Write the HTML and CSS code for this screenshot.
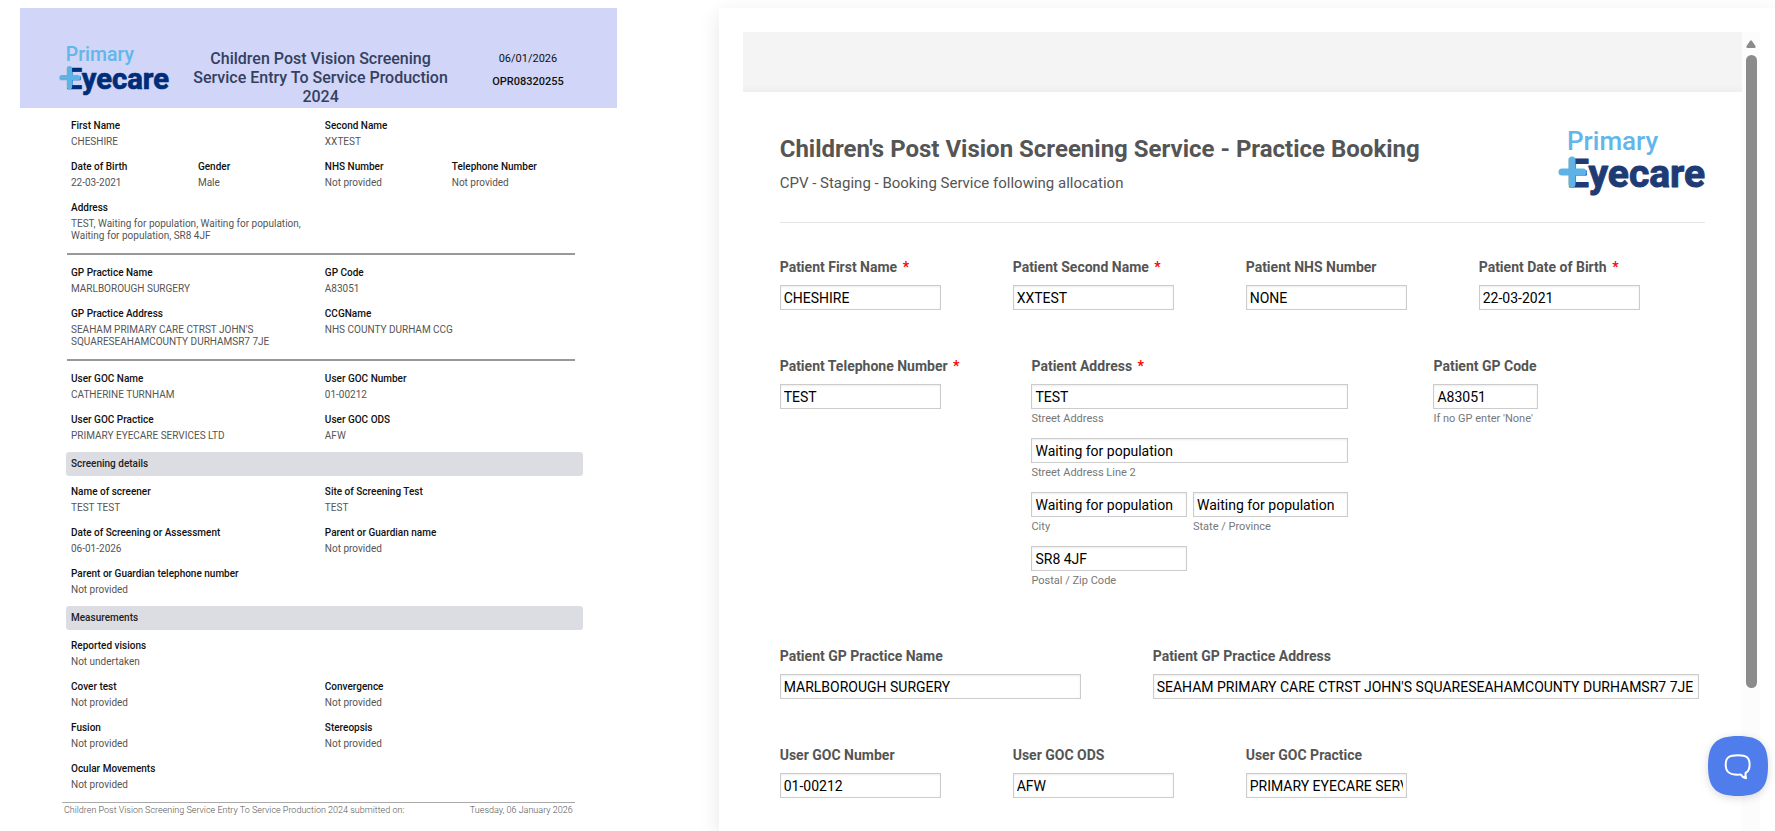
FILE: index.html
```html
<!DOCTYPE html>
<html lang="en">
<head>
  <meta charset="UTF-8">
  <meta name="viewport" content="width=device-width, initial-scale=1.0">
  <title>Children's Post Vision Screening Service - Practice Booking</title>
  <link rel="stylesheet" href="styles.css">
</head>
<body>

  <div class="page">

    <!-- Report -->
    <article class="report">
      <header class="report-header">
        <svg class="logo logo-small" viewBox="0 0 147 65" role="img" aria-label="Primary Eyecare">
          <text class="logo-top" x="9" y="19">Primary</text>
          <text class="logo-bottom" x="9" y="56">Eyecare</text>
          <path class="logo-plus" d="M14 29V53M4 41H25"/>
        </svg>
        <h2>Children Post Vision Screening Service Entry To Service Production 2024</h2>
        <div class="report-ref">
          <span>06/01/2026</span>
          <strong>OPR08320255</strong>
        </div>
      </header>

      <div class="report-body">
        <dl class="details">
          <div class="half"><dt>First Name</dt><dd>CHESHIRE</dd></div>
          <div class="half"><dt>Second Name</dt><dd>XXTEST</dd></div>
          <div><dt>Date of Birth</dt><dd>22-03-2021</dd></div>
          <div><dt>Gender</dt><dd>Male</dd></div>
          <div><dt>NHS Number</dt><dd>Not provided</dd></div>
          <div><dt>Telephone Number</dt><dd>Not provided</dd></div>
          <div class="half"><dt>Address</dt><dd>TEST, Waiting for population, Waiting for population, Waiting for population, SR8 4JF</dd></div>
        </dl>
        <hr>
        <dl class="details">
          <div class="half"><dt>GP Practice Name</dt><dd>MARLBOROUGH SURGERY</dd></div>
          <div class="half"><dt>GP Code</dt><dd>A83051</dd></div>
          <div class="half"><dt>GP Practice Address</dt><dd>SEAHAM PRIMARY CARE CTRST JOHN'S SQUARESEAHAMCOUNTY DURHAMSR7 7JE</dd></div>
          <div class="half"><dt>CCGName</dt><dd>NHS COUNTY DURHAM CCG</dd></div>
        </dl>
        <hr>
        <dl class="details">
          <div class="half"><dt>User GOC Name</dt><dd>CATHERINE TURNHAM</dd></div>
          <div class="half"><dt>User GOC Number</dt><dd>01-00212</dd></div>
          <div class="half"><dt>User GOC Practice</dt><dd>PRIMARY EYECARE SERVICES LTD</dd></div>
          <div class="half"><dt>User GOC ODS</dt><dd>AFW</dd></div>
        </dl>
        <h3>Screening details</h3>
        <dl class="details">
          <div class="half"><dt>Name of screener</dt><dd>TEST TEST</dd></div>
          <div class="half"><dt>Site of Screening Test</dt><dd>TEST</dd></div>
          <div class="half"><dt>Date of Screening or Assessment</dt><dd>06-01-2026</dd></div>
          <div class="half"><dt>Parent or Guardian name</dt><dd>Not provided</dd></div>
          <div class="half"><dt>Parent or Guardian telephone number</dt><dd>Not provided</dd></div>
        </dl>
        <h3>Measurements</h3>
        <dl class="details">
          <div class="full"><dt>Reported visions</dt><dd>Not undertaken</dd></div>
          <div class="half"><dt>Cover test</dt><dd>Not provided</dd></div>
          <div class="half"><dt>Convergence</dt><dd>Not provided</dd></div>
          <div class="half"><dt>Fusion</dt><dd>Not provided</dd></div>
          <div class="half"><dt>Stereopsis</dt><dd>Not provided</dd></div>
          <div class="half"><dt>Ocular Movements</dt><dd>Not provided</dd></div>
        </dl>
      </div>

      <footer class="report-footer">
        <span>Children Post Vision Screening Service Entry To Service Production 2024 submitted on:</span>
        <span>Tuesday, 06 January 2026</span>
      </footer>
    </article>

    <!-- Booking form -->
    <main class="panel">
      <form class="booking">
        <div class="banner"></div>
        <div class="booking-body">
          <header class="booking-header">
            <div>
              <h1>Children's Post Vision Screening Service - Practice Booking</h1>
              <p>CPV - Staging - Booking Service following allocation</p>
            </div>
            <svg class="logo" viewBox="0 0 147 65" role="img" aria-label="Primary Eyecare">
              <text class="logo-top" x="9" y="19">Primary</text>
              <text class="logo-bottom" x="9" y="56">Eyecare</text>
              <path class="logo-plus" d="M14 29V53M4 41H25"/>
            </svg>
          </header>

          <div class="row">
            <div class="field">
              <label for="firstName">Patient First Name <span class="required">*</span></label>
              <input type="text" id="firstName" value="CHESHIRE">
            </div>
            <div class="field">
              <label for="secondName">Patient Second Name <span class="required">*</span></label>
              <input type="text" id="secondName" value="XXTEST">
            </div>
            <div class="field">
              <label for="nhsNumber">Patient NHS Number</label>
              <input type="text" id="nhsNumber" value="NONE">
            </div>
            <div class="field">
              <label for="dob">Patient Date of Birth <span class="required">*</span></label>
              <input type="text" id="dob" value="22-03-2021">
            </div>
          </div>

          <div class="row row-address">
            <div class="field">
              <label for="telephone">Patient Telephone Number <span class="required">*</span></label>
              <input type="text" id="telephone" value="TEST">
            </div>
            <div class="field field-address">
              <label for="street">Patient Address <span class="required">*</span></label>
              <div class="address">
                <div class="line">
                  <input type="text" id="street" value="TEST">
                  <label class="hint" for="street">Street Address</label>
                </div>
                <div class="line">
                  <input type="text" id="street2" value="Waiting for population">
                  <label class="hint" for="street2">Street Address Line 2</label>
                </div>
                <div>
                  <input type="text" id="city" value="Waiting for population">
                  <label class="hint" for="city">City</label>
                </div>
                <div>
                  <input type="text" id="state" value="Waiting for population">
                  <label class="hint" for="state">State / Province</label>
                </div>
                <div>
                  <input type="text" id="postcode" value="SR8 4JF">
                  <label class="hint" for="postcode">Postal / Zip Code</label>
                </div>
              </div>
            </div>
            <div class="field field-short">
              <label for="gpCode">Patient GP Code</label>
              <input type="text" id="gpCode" value="A83051">
              <span class="hint">If no GP enter 'None'</span>
            </div>
          </div>

          <div class="row">
            <div class="field field-medium">
              <label for="gpName">Patient GP Practice Name</label>
              <input type="text" id="gpName" value="MARLBOROUGH SURGERY">
            </div>
            <div class="field field-long">
              <label for="gpAddress">Patient GP Practice Address</label>
              <input type="text" id="gpAddress" value="SEAHAM PRIMARY CARE CTRST JOHN'S SQUARESEAHAMCOUNTY DURHAMSR7 7JE">
            </div>
          </div>

          <div class="row">
            <div class="field">
              <label for="gocNumber">User GOC Number</label>
              <input type="text" id="gocNumber" value="01-00212">
            </div>
            <div class="field">
              <label for="gocOds">User GOC ODS</label>
              <input type="text" id="gocOds" value="AFW">
            </div>
            <div class="field">
              <label for="gocPractice">User GOC Practice</label>
              <input type="text" id="gocPractice" value="PRIMARY EYECARE SERVICES LTD">
            </div>
          </div>
        </div>
      </form>

      <div class="scrollbar">
        <svg width="10" height="8" viewBox="0 0 10 8"><path d="M4 1Q5 -.5 6 1L9.5 6Q10 8 8.500 8H1.500Q0 8 .5 6Z" fill="#8b8b8b"/></svg>
        <div class="thumb"></div>
      </div>
    </main>
  </div>

  <button class="chat" type="button" aria-label="Open chat">
    <svg width="60" height="60" viewBox="0 0 60 60">
      <path class="chat-shape" d="M30 0C52 0 60 8 60 30S52 60 30 60 0 52 0 30 8 0 30 0Z"/>
      <path class="chat-bubble" d="M30 19.200C38.500 19.200 41.600 21.500 41.600 28.500C41.600 33.500 40.300 35.700 37.600 36.800C37.300 38.500 37.500 40.500 38 42.300C35.500 41.500 33.500 39.900 32.500 38.400C31.500 38.700 30.500 38.700 29.500 38.700C20.800 38.700 17.700 35.500 17.700 28.800C17.700 21.500 21 19.200 30 19.200Z"/>
    </svg>
  </button>

</body>
</html>
```
FILE: styles.css
```css
* {
  box-sizing: border-box;
}

body {
  margin: 0;
  font-family: Roboto, Arial, sans-serif;
  background-color: #fff;
  color: #222;
}

.page {
  display: grid;
  grid-template-columns: 34% 1fr;
  grid-template-rows: minmax(0, 1fr);
  gap: 102px;
  height: 100vh;
  padding: 8px 0 0 20px;
  overflow: hidden;
}

h1, h2, h3, p, dl, dd {
  margin: 0;
}

/* Logo */
.logo {
  width: 147px;
  flex: none;
  overflow: visible;
}

.logo-small {
  width: 110px;
}

.logo-top {
  font-size: 26px;
  font-weight: 500;
  fill: #62b6ea;
}

.logo-bottom {
  font-size: 39px;
  font-weight: 700;
  fill: #1f3b73;
  stroke: #1f3b73;
  stroke-width: 1;
  stroke-linejoin: round;
}

.logo-small .logo-bottom {
  fill: #002d78;
  stroke: #002d78;
}

.logo-plus {
  fill: none;
  stroke: #5fb2e6;
  stroke-width: 7;
  stroke-linecap: round;
}

/* Report */
.report-header {
  display: flex;
  align-items: flex-start;
  height: 100px;
  padding: 39px 53px 0 39px;
  background-color: #d1d5f7;
}

.report-header h2 {
  flex: 1;
  padding: 2px 38px 0 18px;
  font-size: 16px;
  font-weight: 500;
  line-height: 19px;
  text-align: center;
  color: #34405f;
}

.report-ref {
  display: flex;
  flex-direction: column;
  align-items: center;
  gap: 8px;
  padding-top: 4px;
  font-size: 11px;
  line-height: 15px;
  color: #111;
}

.report-ref strong {
  font-weight: 500;
}

.report-body {
  padding: 10px 34px 0 46px;
}

.details {
  display: grid;
  grid-template-columns: repeat(4, 1fr);
  row-gap: 9px;
  margin: 0 4px 0 5px;
  font-size: 10px;
}

.details .half {
  grid-column: span 2;
}

.details .full {
  grid-column: span 4;
}

.details dt {
  line-height: 16px;
  font-weight: 500;
  color: #111;
}

.details dd {
  padding: 2px 14px 2px 0;
  line-height: 12px;
  color: #555;
}

.report-body hr {
  margin: 9px 8px 10px 1px;
  border: 0;
  border-top: 2px solid #999;
}

.report-body h3 {
  margin: 8px 0;
  padding: 0 5px;
  border-radius: 3px;
  background-color: #dcdde3;
  font-size: 10px;
  line-height: 24px;
  font-weight: 500;
}

.report-footer {
  display: flex;
  justify-content: space-between;
  margin: 9px 42px 0;
  padding: 0 2px;
  border-top: 1px solid #aaa;
  font-size: 9px;
  line-height: 15px;
  font-weight: 300;
  color: #555;
}

/* Booking form */
.panel {
  display: flex;
  padding: 24px 15px 0 24px;
  box-shadow: 0 6px 20px rgba(0, 0, 0, 0.1);
}

.booking {
  flex: 1;
  min-width: 0;
}

.banner {
  height: 60px;
  background: linear-gradient(#f4f4f4 85%, #efefef);
}

.booking-body {
  padding: 0 37px;
}

.booking-header {
  display: flex;
  justify-content: space-between;
  align-items: center;
  height: 131px;
  padding-top: 12px;
  border-bottom: 1px solid #e5e5e5;
  color: #555;
}

.booking-header h1 {
  font-size: 24px;
  line-height: 32px;
}

.booking-header p {
  margin-top: 8px;
  font-size: 15px;
  line-height: 20px;
}

.row {
  display: flex;
  gap: 72px;
  padding-top: 35px;
  padding-bottom: 22px;
}

.row + .row {
  padding-top: 25px;
}

.field {
  min-width: 161px;
  width: 161px;
  white-space: nowrap;
}

.field label,
.hint {
  display: block;
}

.field > label {
  margin-bottom: 9px;
  font-size: 14px;
  line-height: 18px;
  font-weight: 700;
  color: #555;
}

.required {
  margin-left: 2px;
  color: #f00;
}

.field input {
  display: block;
  width: 100%;
  height: 25px;
  padding: 0 3px;
  border: 1px solid #ccc;
  box-shadow: inset 0 1px 2px rgba(0, 0, 0, 0.08);
  font-family: inherit;
  font-size: 14px;
  color: #000;
}

.row-address .field {
  width: auto;
}

.row-address .field > input {
  width: 161px;
}

.row-address {
  padding-bottom: 34px;
}

.row-address .field-address {
  width: 330px;
}

.address {
  display: grid;
  grid-template-columns: 1fr 1fr;
  gap: 12px 6px;
  width: 317px;
}

.address .line {
  grid-column: span 2;
}

.field .hint {
  margin-top: 2px;
  font-size: 11px;
  line-height: 15px;
  color: #777;
}

.field-short > input,
.row-address .field-short > input {
  width: 105px;
}

.field-medium {
  width: 301px;
}

.field-long {
  width: 546px;
}

/* Scrollbar */
.scrollbar {
  display: flex;
  flex-direction: column;
  align-items: center;
  gap: 7px;
  width: 18px;
  padding-top: 8px;
  background-color: #fcfcfc;
}

.thumb {
  width: 11px;
  height: 80%;
  border-radius: 6px;
  background-color: #8b8b8b;
}

/* Chat button */
.chat {
  position: fixed;
  right: 7px;
  bottom: 35px;
  width: 60px;
  height: 60px;
  padding: 0;
  border: 0;
  background: none;
  cursor: pointer;
  filter: drop-shadow(0 2px 4px rgba(0, 0, 0, 0.15));
}

.chat svg {
  display: block;
}

.chat-shape {
  fill: #507dec;
}

.chat-bubble {
  fill: none;
  stroke: #fff;
  stroke-width: 2;
  stroke-linejoin: round;
}
```
